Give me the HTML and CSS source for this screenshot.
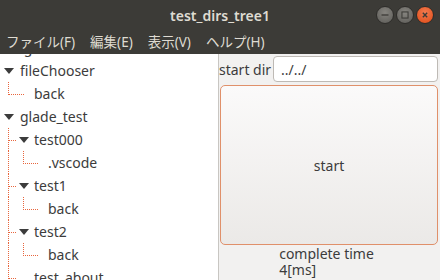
FILE: index.html
```html
<!DOCTYPE html>
<html>
<head>
<meta charset="utf-8">
<link rel="stylesheet" href="styles.css">
</head>
<body>
<div class="window">
  <div class="titlebar">
    <div class="title">test_dirs_tree1</div>
    <div class="wbtns">
      <span class="wbtn"><svg width="16" height="16" viewBox="0 0 16 16"><line x1="4" y1="8" x2="12" y2="8" stroke="#3c3b37" stroke-width="1.5"/></svg></span>
      <span class="wbtn"><svg width="16" height="16" viewBox="0 0 16 16"><rect x="4.5" y="4.5" width="7" height="7" fill="none" stroke="#3c3b37" stroke-width="1.2"/></svg></span>
      <span class="wbtn close"><svg width="16" height="16" viewBox="0 0 16 16"><path d="M5.5 5.5 L10.5 10.5 M10.5 5.5 L5.5 10.5" stroke="#3c3b37" stroke-width="1.6"/></svg></span>
    </div>
  </div>
  <div class="menubar">
    <span class="mi">ファイル(F)</span>
    <span class="mi">編集(E)</span>
    <span class="mi">表示(V)</span>
    <span class="mi">ヘルプ(H)</span>
  </div>
  <div class="content">
    <div class="tree">
      <div class="rows">
        <div class="row partial"><span class="txt l0">.git</span></div>
        <div class="row"><span class="exp l0"></span><span class="txt l0">fileChooser</span></div>
        <div class="row"><span class="lnk k1"></span><span class="txt l1">back</span></div>
        <div class="row"><span class="exp l0"></span><span class="txt l0">glade_test</span></div>
        <div class="row"><span class="vl v1"></span><span class="hl h1"></span><span class="exp l1"></span><span class="txt l1">test000</span></div>
        <div class="row"><span class="vl v1"></span><span class="lnk k2"></span><span class="txt l2">.vscode</span></div>
        <div class="row"><span class="vl v1"></span><span class="hl h1"></span><span class="exp l1"></span><span class="txt l1">test1</span></div>
        <div class="row"><span class="vl v1"></span><span class="lnk k2"></span><span class="txt l2">back</span></div>
        <div class="row"><span class="vl v1"></span><span class="hl h1"></span><span class="exp l1"></span><span class="txt l1">test2</span></div>
        <div class="row"><span class="vl v1"></span><span class="lnk k2"></span><span class="txt l2">back</span></div>
        <div class="row"><span class="vl v1"></span><span class="hl h1"></span><span class="txt l1">test_about</span></div>
      </div>
    </div>
    <div class="side">
      <div class="dirrow">
        <span class="lbl">start dir</span>
        <div class="entry">../../</div>
      </div>
      <div class="btn">start</div>
      <div class="result">
        <div class="rtext">complete time<br>4[ms]</div>
      </div>
    </div>
  </div>
</div>
</body>
</html>
```
FILE: styles.css
```css
html, body {
  margin: 0;
  padding: 0;
}
body {
  width: 440px;
  height: 280px;
  overflow: hidden;
  font-family: "Noto Sans", "Noto Sans CJK JP", sans-serif;
  font-size: 14px;
  color: #3c3c3c;
  background: #f2f1f0;
}
.window {
  display: flex;
  flex-direction: column;
  height: 280px;
}
.titlebar {
  height: 30px;
  background: #3c3b37;
  position: relative;
  display: flex;
  align-items: center;
  justify-content: center;
}
.title {
  color: #dfdbd2;
  font-family: "Noto Sans", sans-serif;
  font-weight: 600;
  font-size: 14px;
}
.wbtns {
  position: absolute;
  right: 6px;
  top: 6px;
  display: flex;
  gap: 2px;
}
.wbtn {
  width: 18px;
  height: 18px;
  border-radius: 50%;
  background: radial-gradient(circle at 50% 35%, #86847f, #5c5b57);
  border: 1px solid #2e2d2a;
  box-sizing: border-box;
  display: flex;
  align-items: center;
  justify-content: center;
}
.wbtn svg {
  width: 14px;
  height: 14px;
}
.wbtn.close {
  background: radial-gradient(circle at 50% 35%, #f37b4f, #df4a16);
}
.menubar {
  height: 24px;
  background: #3c3b37;
  display: flex;
  align-items: center;
  padding-left: 6px;
  gap: 15px;
  color: #dfdbd2;
  font-size: 13.5px;
  line-height: 17px;
}
.content {
  flex: 1;
  display: flex;
  min-height: 0;
}
.tree {
  width: 218px;
  background: #ffffff;
  border-right: 1px solid #c8c6c2;
  overflow: hidden;
}
.rows {
  margin-top: -18px;
}
.row {
  position: relative;
  height: 23px;
  display: flex;
  align-items: center;
  color: #3c3c3c;
}
.txt {
  white-space: nowrap;
  line-height: 23px;
}
.txt.l0 { padding-left: 20px; }
.txt.l1 { padding-left: 34px; }
.txt.l2 { padding-left: 48px; }
.exp {
  position: absolute;
  top: 9px;
  width: 0;
  height: 0;
  border-left: 5px solid transparent;
  border-right: 5px solid transparent;
  border-top: 6px solid #3c3c3c;
}
.exp.l0 { left: 4px; }
.exp.l1 { left: 19px; }
.lnk {
  position: absolute;
  top: 0;
  height: 12px;
  border-left: 1px dotted #e8663d;
  border-bottom: 1px dotted #e8663d;
}
.lnk.k1 { left: 8px; width: 15px; }
.lnk.k2 { left: 23px; width: 14px; }
.vl {
  position: absolute;
  top: 0;
  bottom: 0;
  border-left: 1px dotted #e8663d;
}
.vl.v1 { left: 8px; }
.hl {
  position: absolute;
  top: 12px;
  height: 0;
  border-top: 1px dotted #e8663d;
}
.hl.h1 { left: 9px; width: 7px; }
.side {
  flex: 1;
  display: flex;
  flex-direction: column;
  padding: 1px 2px 0 0;
}
.dirrow {
  display: flex;
  align-items: center;
  gap: 2px;
  height: 28px;
}
.lbl {
  color: #3c3c3c;
  white-space: nowrap;
}
.entry {
  flex: 1;
  height: 26px;
  box-sizing: border-box;
  border: 1px solid #bebab5;
  border-radius: 4px;
  background: #ffffff;
  padding-left: 7px;
  display: flex;
  align-items: center;
  color: #3c3c3c;
}
.btn {
  margin: 2px 0 0 1px;
  height: 160px;
  box-sizing: border-box;
  border: 1px solid #e0906a;
  border-radius: 5px;
  background: linear-gradient(#fbfafa, #ebe9e7);
  display: flex;
  align-items: center;
  justify-content: center;
  color: #3c3c3c;
}
.result {
  display: flex;
  justify-content: center;
  padding-top: 1px;
}
.rtext {
  line-height: 16px;
  color: #3c3c3c;
  margin-left: -4px;
}
```
